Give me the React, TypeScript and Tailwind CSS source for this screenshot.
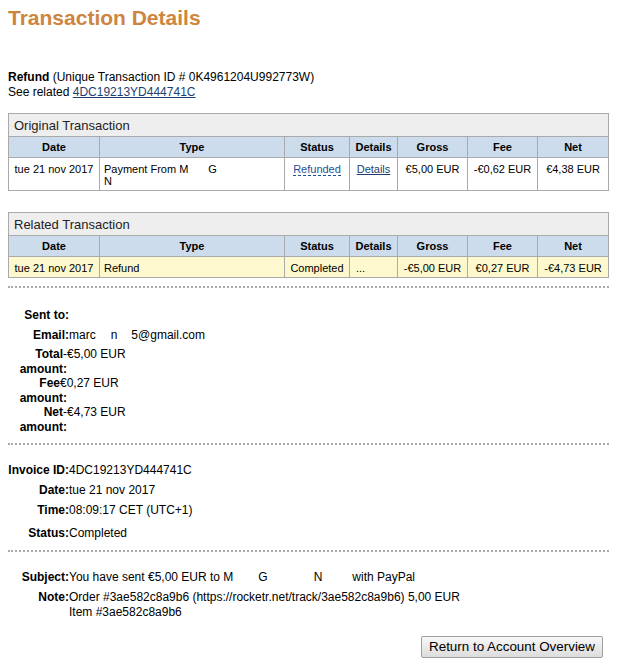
import React from 'react';

interface Row {
  date: string;
  type: React.ReactNode;
  status: React.ReactNode;
  details: React.ReactNode;
  gross: string;
  fee: string;
  net: string;
}

function TxTable({ title, row, highlight }: { title: string; row: Row; highlight?: boolean }) {
  const cell = 'border border-[#aaaaaa] px-1 pt-[5px] pb-[3px] align-top whitespace-nowrap leading-[12px]';
  return (
    <table className="w-[600px] table-fixed border-collapse text-[11px] leading-[13px]">
      <colgroup>
        <col className="w-[91px]" />
        <col className="w-[185px]" />
        <col className="w-[65px]" />
        <col className="w-[48px]" />
        <col className="w-[70px]" />
        <col className="w-[70px]" />
        <col className="w-[71px]" />
      </colgroup>
      <tbody>
        <tr>
          <td colSpan={7} className="border border-[#aaaaaa] bg-[#eeeeee] px-[5px] h-[23px] text-[13px] text-[#222]">
            {title}
          </td>
        </tr>
        <tr className="bg-[#ccdcec] font-bold text-center">
          <td className="border border-[#aaaaaa] h-[21px]">Date</td>
          <td className="border border-[#aaaaaa]">Type</td>
          <td className="border border-[#aaaaaa]">Status</td>
          <td className="border border-[#aaaaaa]">Details</td>
          <td className="border border-[#aaaaaa]">Gross</td>
          <td className="border border-[#aaaaaa]">Fee</td>
          <td className="border border-[#aaaaaa]">Net</td>
        </tr>
        <tr className={highlight ? 'bg-[#fdf8cd]' : 'bg-white'}>
          <td className={`${cell} text-center`}>{row.date}</td>
          <td className={cell}>{row.type}</td>
          <td className={`${cell} text-center`}>{row.status}</td>
          <td className={highlight ? cell : `${cell} text-center`}>{row.details}</td>
          <td className={`${cell} text-center`}>{row.gross}</td>
          <td className={`${cell} text-center`}>{row.fee}</td>
          <td className={`${cell} text-center`}>{row.net}</td>
        </tr>
      </tbody>
    </table>
  );
}

function Field({ label, children, className = '' }: { label: string; children: React.ReactNode; className?: string }) {
  return (
    <div className={`flex ${className}`}>
      <div className="w-[61px] shrink-0 text-right font-bold">{label}</div>
      <div>{children}</div>
    </div>
  );
}

function Amount({ first, w, value }: { first: string; w: string; value: string }) {
  return (
    <div className="leading-[14.5px]">
      <div className="flex">
        <div className={`${w} shrink-0 text-right font-bold`}>{first}</div>
        <div>{value}</div>
      </div>
      <div className="w-[59px] text-right font-bold">amount:</div>
    </div>
  );
}

const Divider = () => <div className="border-t-2 border-dotted border-[#aaaaaa] w-[601px]" />;

export default function App() {
  return (
    <div className="w-[640px] h-[670px] bg-white text-black text-[12px] leading-[15px] font-['Liberation_Sans',Arial,sans-serif] px-2 pt-[6px]">
      <h1 className="text-[21px] leading-[24px] font-bold text-[#cd8540]">Transaction Details</h1>

      <div className="mt-[40px]">
        <div>
          <span className="font-bold">Refund</span> (Unique Transaction ID # 0K4961204U992773W)
        </div>
        <div>
          See related <a href="#" className="text-[#1c3f73] underline">4DC19213YD444741C</a>
        </div>
      </div>

      <div className="mt-[13px]">
        <TxTable
          title="Original Transaction"
          row={{
            date: 'tue 21 nov 2017',
            type: (
              <>
                Payment From M<span className="ml-[20px]">G</span>
                <br />
                N
              </>
            ),
            status: (
              <span className="text-[#1d4f9c] border-b border-dashed border-[#1d4f9c]">Refunded</span>
            ),
            details: <a href="#" className="text-[#1c3f73] underline">Details</a>,
            gross: '€5,00 EUR',
            fee: '-€0,62 EUR',
            net: '€4,38 EUR',
          }}
        />
      </div>

      <div className="mt-[21px]">
        <TxTable
          title="Related Transaction"
          highlight
          row={{
            date: 'tue 21 nov 2017',
            type: 'Refund',
            status: 'Completed',
            details: <span className="pl-[2px]">...</span>,
            gross: '-€5,00 EUR',
            fee: '€0,27 EUR',
            net: '-€4,73 EUR',
          }}
        />
      </div>

      <div className="mt-[8px]">
        <Divider />
      </div>

      <div className="mt-[20px]">
        <Field label="Sent to:">{''}</Field>
        <Field label="Email:" className="mt-[5px]">
          marc<span className="ml-[15px]">n</span>
          <span className="ml-[14px]">5@gmail.com</span>
        </Field>
        <div className="mt-[4px]">
          <Amount first="Total" w="w-[55px]" value="-€5,00 EUR" />
          <Amount first="Fee" w="w-[52px]" value="€0,27 EUR" />
          <Amount first="Net" w="w-[55px]" value="-€4,73 EUR" />
        </div>
      </div>

      <div className="mt-[9px]">
        <Divider />
      </div>

      <div className="mt-[18px]">
        <Field label="Invoice ID:">4DC19213YD444741C</Field>
        <Field label="Date:" className="mt-[5px]">tue 21 nov 2017</Field>
        <Field label="Time:" className="mt-[5px]">08:09:17 CET (UTC+1)</Field>
        <Field label="Status:" className="mt-[8px]">Completed</Field>
      </div>

      <div className="mt-[9px]">
        <Divider />
      </div>

      <div className="mt-[18px]">
        <Field label="Subject:">
          You have sent €5,00 EUR to M<span className="ml-[25px]">G</span>
          <span className="ml-[46px]">N</span>
          <span className="ml-[30px]">with PayPal</span>
        </Field>
        <Field label="Note:" className="mt-[5px]">
          Order #3ae582c8a9b6 (https://rocketr.net/track/3ae582c8a9b6) 5,00 EUR
          <br />
          Item #3ae582c8a9b6
        </Field>
      </div>

      <div className="mt-[16px] flex justify-end w-[595px]">
        <button className="h-[22px] px-[7px] text-[13.4px] leading-[20px] border border-[#a0a0a0] rounded-[2px] bg-gradient-to-b from-[#f8f8f8] to-[#dcdcdc] text-black">
          Return to Account Overview
        </button>
      </div>
    </div>
  );
}
